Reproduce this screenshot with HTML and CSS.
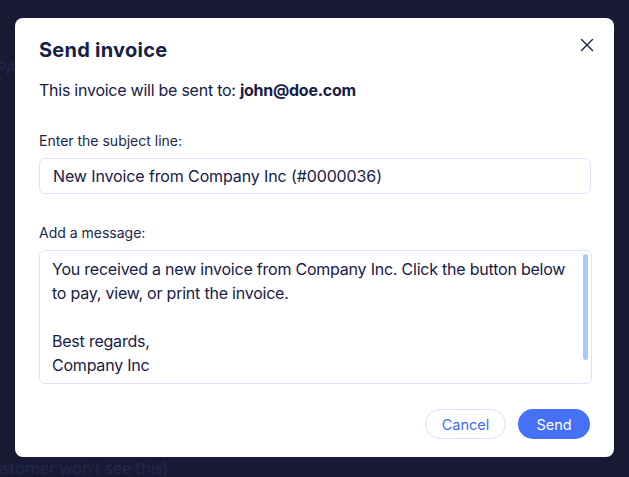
FILE: index.html
```html
<!DOCTYPE html>
<html lang="en">
<head>
<meta charset="utf-8">
<title>Send invoice</title>
<link rel="stylesheet" href="styles.css">
</head>
<body>
<div class="backdrop">
  <div class="bg-text bg-top">PA</div>
  <div class="modal">
    <div class="header">
      <h1 class="title">Send invoice</h1>
      <button class="close" aria-label="Close">
        <svg width="14" height="14" viewBox="0 0 14 14"><path d="M1.5 1.5 L12.5 12.5 M12.5 1.5 L1.5 12.5" stroke="#162046" stroke-width="1.4" fill="none" stroke-linecap="round"/></svg>
      </button>
    </div>
    <p class="recipient">This invoice will be sent to: <strong>john@doe.com</strong></p>
    <label class="label">Enter the subject line:</label>
    <div class="input">New Invoice from Company Inc (#0000036)</div>
    <label class="label label-gap">Add a message:</label>
    <div class="textarea">
      <div class="text">You received a new invoice from Company Inc. Click the button below<br>to pay, view, or print the invoice.<br><br>Best regards,<br>Company Inc</div>
      <div class="thumb"></div>
    </div>
    <div class="actions">
      <button class="btn btn-secondary">Cancel</button>
      <button class="btn btn-primary">Send</button>
    </div>
  </div>
  <div class="bg-text bg-bottom">ustomer won't see this)</div>
</div>
</body>
</html>
```
FILE: styles.css
```css
* { box-sizing: border-box; }
html, body { margin: 0; padding: 0; }
body {
  width: 629px;
  height: 477px;
  overflow: hidden;
  background: #181a35;
  font-family: "Inter", "Noto Sans", sans-serif;
  color: #162046;
}
.backdrop {
  position: relative;
  width: 629px;
  height: 477px;
  padding-top: 18px;
  padding-left: 15px;
}
.bg-text {
  position: absolute;
  color: #24284a;
  font-family: "Noto Sans", sans-serif;
  font-size: 16px;
}
.bg-top { left: -3px; top: 57px; }
.bg-bottom { left: -8px; top: 457px; }
.modal {
  position: relative;
  width: 599px;
  height: 439px;
  background: #fff;
  border-radius: 8px;
  padding: 18px 24px 18px 24px;
  display: flex;
  flex-direction: column;
}
.header {
  display: flex;
  justify-content: space-between;
  align-items: center;
  height: 28px;
}
.title {
  margin: 0;
  font-size: 20px;
  font-weight: 700;
  line-height: 28px;
  letter-spacing: 0.25px;
}
.close {
  border: 0;
  background: none;
  padding: 0;
  width: 14px;
  height: 14px;
  margin-right: -4px;
  margin-top: -10px;
  display: flex;
}
.recipient {
  margin: 14px 0 0;
  font-size: 16px;
  line-height: 24px;
  letter-spacing: -0.25px;
}
.recipient strong { font-weight: 700; }
.label {
  display: block;
  margin-top: 30px;
  font-size: 14px;
  line-height: 18px;
  color: #20284a;
}
.input {
  margin-top: 8px;
  height: 36px;
  width: 552px;
  border: 1px solid #dce4fb;
  border-radius: 6px;
  padding: 0 13px;
  font-size: 16px;
  line-height: 34px;
  letter-spacing: -0.12px;
}
.textarea {
  position: relative;
  margin-top: 8px;
  height: 134px;
  width: 553px;
  border: 1px solid #dce4fb;
  border-radius: 6px;
  padding: 6px 12px;
  font-size: 16px;
  line-height: 24px;
  letter-spacing: -0.22px;
  overflow: hidden;
}
.text { white-space: nowrap; }
.thumb {
  position: absolute;
  right: 3px;
  top: 3px;
  width: 5px;
  height: 106px;
  border-radius: 3px;
  background: #adc6fb;
}
.actions {
  margin-top: 25px;
  display: flex;
  justify-content: flex-end;
  gap: 12px;
}
.btn {
  height: 30px;
  border-radius: 15px;
  font-family: inherit;
  font-size: 14.5px;
  padding: 0;
  cursor: pointer;
}
.btn-secondary {
  width: 81px;
  background: #fff;
  border: 1px solid #d6e0fc;
  color: #3e6cf6;
}
.btn-primary {
  width: 72px;
  background: #4471f6;
  border: 0;
  color: #fff;
}
```
